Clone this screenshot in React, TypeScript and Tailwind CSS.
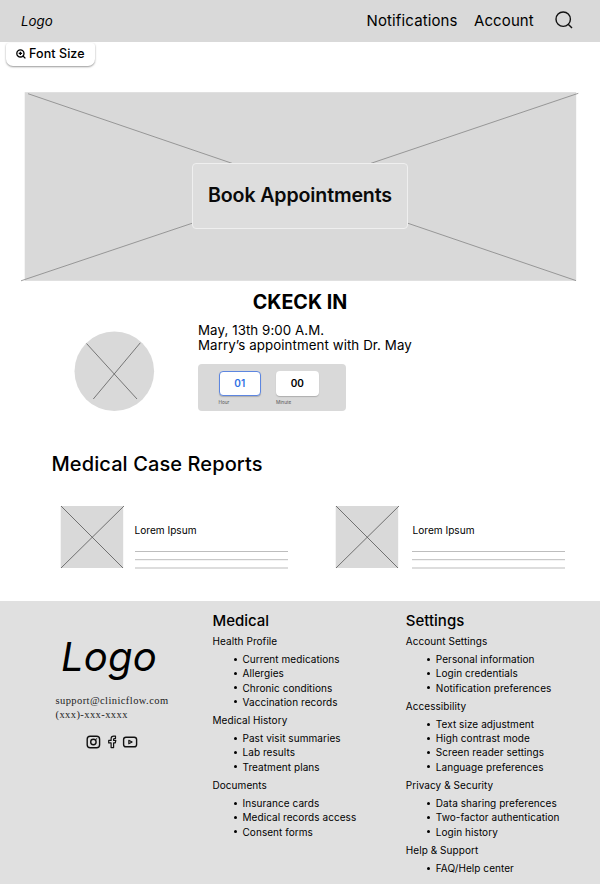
import React from "react";

type Group = { title: string; items: string[] };

const medical: Group[] = [
  { title: "Health Profile", items: ["Current medications", "Allergies", "Chronic conditions", "Vaccination records"] },
  { title: "Medical History", items: ["Past visit summaries", "Lab results", "Treatment plans"] },
  { title: "Documents", items: ["Insurance cards", "Medical records access", "Consent forms"] },
];

const settings: Group[] = [
  { title: "Account Settings", items: ["Personal information", "Login credentials", "Notification preferences"] },
  { title: "Accessibility", items: ["Text size adjustment", "High contrast mode", "Screen reader settings", "Language preferences"] },
  { title: "Privacy & Security", items: ["Data sharing preferences", "Two-factor authentication", "Login history"] },
  { title: "Help & Support", items: ["FAQ/Help center"] },
];

function Header() {
  return (
    <header className="flex h-[41.5px] items-center bg-[#d9d9d9] pl-[21px] pr-[27px]">
      <span className="text-[13.3px] italic leading-5 tracking-[0.05px]">Logo</span>
      <nav className="ml-auto flex items-center text-[15px] leading-5">
        <a className="w-[107.5px] tracking-[0.13px]">Notifications</a>
        <a className="w-[81px] tracking-[0.1px]">Account</a>
        <svg className="-mt-0.5 h-[18px] w-[18px]" viewBox="0 0 18 18" fill="none" stroke="#111" strokeWidth="1.4">
          <circle cx="8.2" cy="8.2" r="7.2" />
          <path d="M13.2 13.2 17 17" />
        </svg>
      </nav>
    </header>
  );
}

function Hero() {
  return (
    <section className="mt-[26px] grid h-[190px] w-[600px]">
      <svg className="col-start-1 row-start-1" width="600" height="190" viewBox="0 92 600 190" fill="none">
        <rect x="24.7" y="92.2" width="551.5" height="188.6" fill="#d9d9d9" />
        <path d="M28 93.7 232 163.3M371 163.3 578.3 93.3M21 280.8 192 223.3M408 223.3 576 280.6" stroke="#858585" strokeWidth="0.8" />
      </svg>
      <button className="col-start-1 row-start-1 ml-[192px] mt-[71px] h-[65.5px] w-[216px] rounded-[4px] border border-[#efefef] bg-[#dddddd] text-[19.6px] font-semibold tracking-[-0.14px] text-[#0a0a0a]">
        Book Appointments
      </button>
    </section>
  );
}

function CheckIn() {
  return (
    <section>
      <h1 className="mt-[7.5px] h-[24px] text-center text-[19.7px] font-bold leading-6">CKECK IN</h1>
      <div className="flex pl-[74px] pt-[9px]">
        <svg className="mt-[8px] h-[81px] w-[81px]" viewBox="74 330.5 81 81" fill="none">
          <circle cx="114.3" cy="370.8" r="39.8" fill="#d9d9d9" />
          <path d="M86.5 343 137 398.5M140.3 342.3 93.3 398.5" stroke="#5c5c5c" strokeWidth="0.8" />
        </svg>
        <div className="ml-[43px]">
          <p className="text-[13.3px] leading-[15.7px] tracking-[0.08px]">
            May, 13th 9:00 A.M.
            <br />
            Marry’s appointment with Dr. May
          </p>
          <div className="mt-[10.2px] flex h-[47px] w-[148px] gap-[15px] rounded-[4px] bg-[#d9d9d9] pl-[20.5px] pt-[7px]">
            <div>
              <div className="flex h-[25px] w-[42.5px] items-center justify-center rounded-[4px] border border-[#5d86e0] bg-white text-[10px] font-semibold text-[#2f6fe4] shadow-[0_1px_1px_#8888]">01</div>
              <div className="mt-[2px] h-[8px] text-[4.7px] leading-[8px] text-[#555]">Hour</div>
            </div>
            <div>
              <div className="flex h-[25px] w-[42.5px] items-center justify-center rounded-[4px] bg-white text-[10px] font-semibold shadow-[0_1px_1px_#8888]">00</div>
              <div className="mt-[2px] h-[8px] text-[4.7px] leading-[8px] text-[#555]">Minute</div>
            </div>
          </div>
        </div>
      </div>
    </section>
  );
}

function Report() {
  return (
    <article className="flex">
      <svg className="h-[64px] w-[65px]" viewBox="60 505 65 64" fill="none">
        <rect x="60.7" y="506" width="62.5" height="62" fill="#d9d9d9" />
        <path d="M61 506 123 568M124 506 61 568" stroke="#555" strokeWidth="0.8" />
      </svg>
      <div className="ml-[9.5px] w-[153px] pt-[17px] group-last:ml-[12.3px]">
        <h3 className="text-[10.1px] leading-4">Lorem Ipsum</h3>
        <svg className="mt-[12px] block" width="153" height="20" fill="none" strokeWidth="1">
          <path d="M0 1.5H153M0 9.7H153" stroke="#bdbdbd" />
          <path d="M0 18H153" stroke="#d2d2d2" strokeWidth="1.6" />
        </svg>
      </div>
    </article>
  );
}

function LinkColumn({ title, groups }: { title: string; groups: Group[] }) {
  return (
    <div className="w-[193.3px]">
      <h2 className="h-[22.8px] text-[15px] font-medium leading-5">{title}</h2>
      {groups.map((g) => (
        <div key={g.title} className="pb-[4px]">
          <h3 className="mb-[4.2px] h-[14.2px] text-[10px] leading-[14.2px] tracking-[0.06px]">{g.title}</h3>
          <ul>
            {g.items.map((t) => (
              <li key={t} className="flex h-[14.2px] items-center pl-[21px] text-[10px] leading-[14.2px] tracking-[0.06px]">
                <span className="mr-[6px] h-[3px] w-[3px] rounded-full bg-black" />
                {t}
              </li>
            ))}
          </ul>
        </div>
      ))}
    </div>
  );
}

function Socials() {
  return (
    <svg className="ml-[85px] mt-[13px] block" width="54" height="16" viewBox="85 734 54 16" fill="none" stroke="#111" strokeWidth="1.4" strokeLinejoin="round">
      <rect x="87.2" y="736.2" width="12.4" height="11.6" rx="3" />
      <circle cx="93.4" cy="742" r="2.7" />
      <circle cx="96.6" cy="738.9" r="0.4" strokeWidth="0.7" />
      <path d="M115.5 736.2h-1.8c-1.7 0-2.6 1-2.6 2.6v1.6h-2.4v2.5h2.4v4.7h2.5v-4.7h1.7l.5-2.5h-2.2v-1.2c0-.5.2-.7.8-.7h1.1z" strokeWidth="1.2" />
      <rect x="123.6" y="737.2" width="13" height="9.6" rx="2.4" />
      <path d="m128.8 740.2 3.3 1.8-3.3 1.8z" strokeWidth="1.1" />
    </svg>
  );
}

export default function App() {
  return (
    <div className="h-[884px] w-[600px] overflow-hidden bg-white font-['Inter',sans-serif] text-black">
      <Header />
      <div className="ml-[6px] mt-px flex h-[23.5px] w-[89px] items-center rounded-b-[7px] rounded-t-[3px] bg-white pl-[10px] text-[12.5px] font-medium tracking-[0.08px] shadow-[0_1px_2px_#0006]">
        <svg className="mr-[3px] h-[10px] w-[10px]" viewBox="0 0 10 10" fill="none" stroke="#000" strokeWidth="1.3">
          <circle cx="4.4" cy="4.4" r="3.6" />
          <path d="m7 7 2.4 2.4M4.4 2.7v3.4M2.7 4.4h3.4" />
        </svg>
        Font Size
      </div>
      <Hero />
      <CheckIn />
      <h2 className="ml-[51.5px] mt-[39px] h-[26px] text-[20px] font-medium leading-[26px] tracking-[0.1px]">Medical Case Reports</h2>
      <div className="ml-[60px] mt-[28px] flex gap-[47.7px]">
        <div className="group">
          <Report />
        </div>
        <div className="group">
          <Report />
        </div>
      </div>
      <footer className="mt-[31px] flex h-[285px] bg-[#e0e0e0]">
        <div className="w-[212.5px]">
          <div className="ml-[61px] mt-[32px] h-[48px] text-[40px] italic leading-[48px] tracking-[0.2px]">Logo</div>
          <p className="ml-[55.5px] mt-[13.5px] font-['Liberation_Serif',serif] text-[10.5px] leading-[13.5px] tracking-[0.42px] text-[#222]">
            support@clinicflow.com
            <br />
            (xxx)-xxx-xxxx
          </p>
          <Socials />
        </div>
        <div className="flex pt-[10.5px]">
          <LinkColumn title="Medical" groups={medical} />
          <LinkColumn title="Settings" groups={settings} />
        </div>
      </footer>
    </div>
  );
}
